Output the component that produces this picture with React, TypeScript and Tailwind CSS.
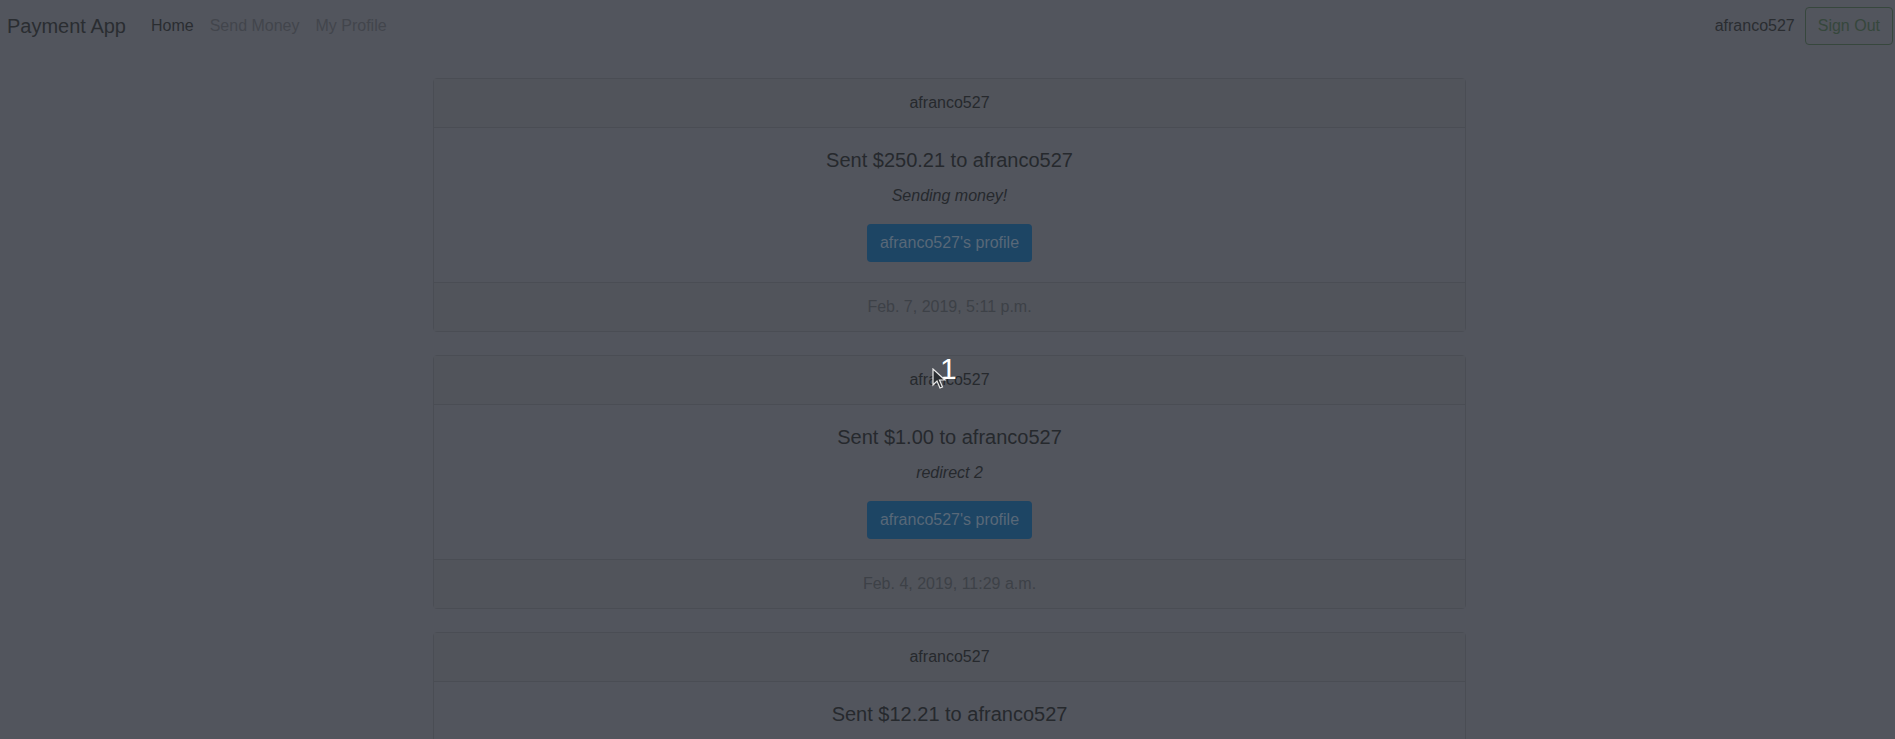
const payments = [
  { to: "afranco527", amount: "$250.21", memo: "Sending money!", date: "Feb. 7, 2019, 5:11 p.m." },
  { to: "afranco527", amount: "$1.00", memo: "redirect 2", date: "Feb. 4, 2019, 11:29 a.m." },
  { to: "afranco527", amount: "$12.21", memo: "test", date: "Feb. 1, 2019, 3:02 p.m." },
];

function PaymentCard({ p }: { p: (typeof payments)[number] }) {
  return (
    <div className="border border-[#4a4d54] rounded-[4px] mb-[23px] text-center">
      <div className="bg-[#51545b] border-b border-[#4a4d54] py-3 px-5 leading-6 text-[16px] text-[#26292d]">
        {p.to}
      </div>
      <div className="px-5 pt-5 pb-5">
        <h5 className="text-[20px] leading-[24px] mb-3 text-[#26292d]">
          Sent {p.amount} to {p.to}
        </h5>
        <p className="italic text-[16px] leading-6 mb-4 text-[#26292d]">{p.memo}</p>
        <button className="bg-[#1d4564] text-[#586878] text-[16px] leading-6 px-[13px] py-[7px] rounded-[4px]">
          {p.to}'s profile
        </button>
      </div>
      <div className="bg-[#51545b] border-t border-[#4a4d54] py-3 px-5 leading-6 text-[16px] text-[#3d4147]">
        {p.date}
      </div>
    </div>
  );
}

function App() {
  return (
    <div
      className="relative h-[739px] overflow-hidden bg-[#52555d]"
      style={{ fontFamily: '"Liberation Sans", Arial, sans-serif' }}
    >
      <nav className="flex items-center h-[52px] pl-[7px] pr-[2px]">
        <span className="text-[20px] text-[#2a2d31] mr-[25px]">Payment App</span>
        <div className="flex gap-[16px] text-[16px]">
          <span className="text-[#2a2d31]">Home</span>
          <span className="text-[#42454c]">Send Money</span>
          <span className="text-[#42454c]">My Profile</span>
        </div>
        <div className="ml-auto flex items-center">
          <span className="text-[16px] text-[#2a2d31] mr-[10px]">afranco527</span>
          <button className="border border-[#37473d] text-[#36473c] text-[16px] leading-6 px-3 py-[6px] rounded-[4px]">
            Sign Out
          </button>
        </div>
      </nav>

      <div className="flex justify-center pl-[4px] mt-[26px]">
        <div className="w-[1033px]">
          {payments.map((p, i) => (
            <PaymentCard key={i} p={p} />
          ))}
        </div>
      </div>

      {/* recording artefacts: click counter and cursor */}
      <span className="absolute left-[940px] top-[354px] text-[30px] leading-none text-white">1</span>
      <svg className="absolute left-[932px] top-[368px]" width="14" height="22" viewBox="0 0 14 22">
        <path d="M1 1 L1 17 L5 13 L8 20 L10.5 19 L7.5 12 L13 12 Z" fill="#2a2d31" stroke="#e8e8e8" strokeWidth="1.2" />
      </svg>
    </div>
  );
}

export default App;
